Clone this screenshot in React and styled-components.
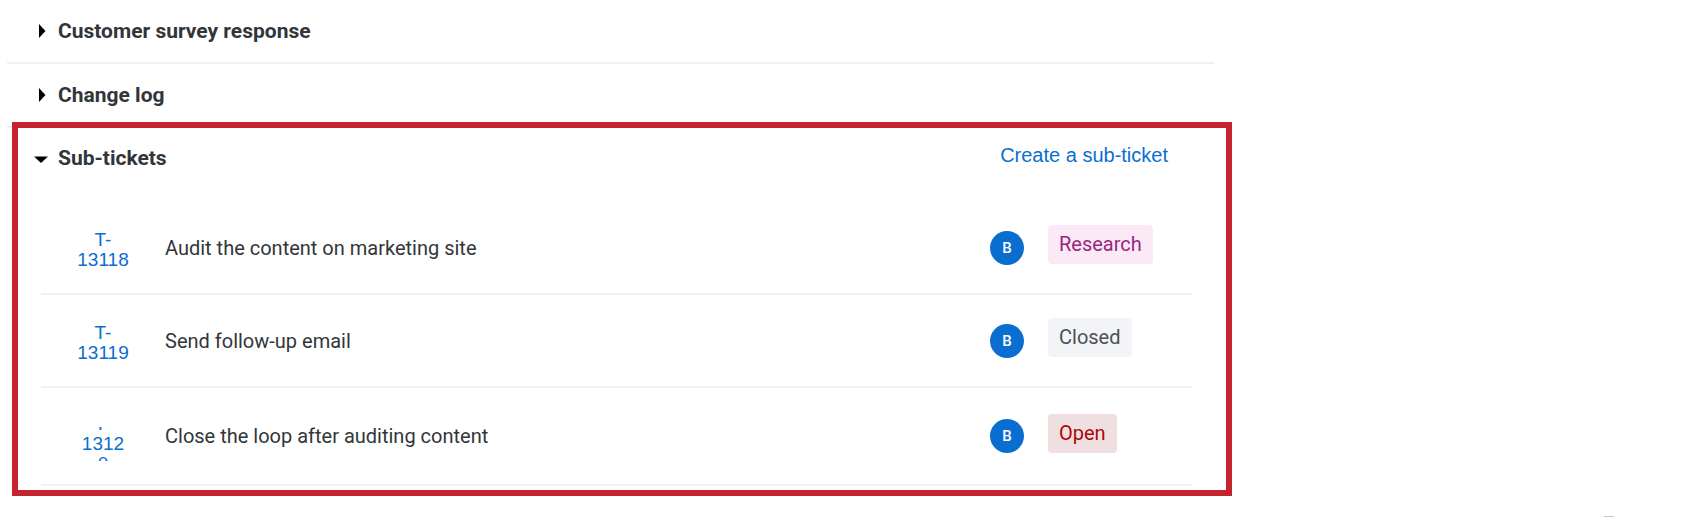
import React, { useState } from 'react';
import styled, { createGlobalStyle } from 'styled-components'


const tickets = [
  { id: 'T-13118', title: 'Audit the content on marketing site', owner: 'B', status: 'Research' },
  { id: 'T-13119', title: 'Send follow-up email', owner: 'B', status: 'Closed' },
  { id: 'T-13120', title: 'Close the loop after auditing content', owner: 'B', status: 'Open', narrow: true },
]

const statusColors = {
  Research: { text: '#99257f', background: '#fce9f6' },
  Closed: { text: '#4e5054', background: '#f3f4f7' },
  Open: { text: '#aa0808', background: '#f0dfe1' },
}

function Arrow({ open }){
  return(
    <svg width="14" height="14" viewBox="0 0 14 14" aria-hidden="true">
      {open ? <path d="M0 5.500h14L7 12z" /> : <path d="M5 0v14l6.500-7z" />}
    </svg>
  )
}

function SectionToggle({ title, open, onClick }){
  return(
    <Heading>
      <Toggle type="button" aria-expanded={open} onClick={onClick}>
        <Arrow open={open} />
        {title}
      </Toggle>
    </Heading>
  )
}

export default function App(){

  const [open, setOpen] = useState({ survey: false, log: false, tickets: true });
  const toggle = (key) => setOpen({ ...open, [key]: !open[key] });

  return(
    <Page>
      <GlobalStyle />
      <Main>
        <Section>
          <SectionToggle title="Customer survey response" open={open.survey} onClick={() => toggle('survey')} />
        </Section>
        <Section>
          <SectionToggle title="Change log" open={open.log} onClick={() => toggle('log')} />
        </Section>

        <Frame>
          <FrameHeader>
            <SectionToggle title="Sub-tickets" open={open.tickets} onClick={() => toggle('tickets')} />
            <CreateLink href="#create">Create a sub-ticket</CreateLink>
          </FrameHeader>
          {open.tickets &&
            <TicketList>
              {tickets.map((ticket) => (
                <TicketRow key={ticket.id} $tall={ticket.narrow}>
                  <IdCell $tall={ticket.narrow}>
                    <IdLink href={'#' + ticket.id} $narrow={ticket.narrow}>{ticket.id}</IdLink>
                  </IdCell>
                  <Title>{ticket.title}</Title>
                  <Avatar>{ticket.owner}</Avatar>
                  <StatusCell>
                    <Status $colors={statusColors[ticket.status]}>{ticket.status}</Status>
                  </StatusCell>
                </TicketRow>
              ))}
            </TicketList>
          }
        </Frame>
      </Main>
      <Footer>
        <Handle />
      </Footer>
    </Page>
  )
}

const GlobalStyle = createGlobalStyle`
  *{
    box-sizing:border-box;
  }
  body{
    margin:0;
    background-color:#fff;
    color:#32363a;
    font-family:Roboto, "Liberation Sans", sans-serif;
    font-size:20px;
    line-height:24px;
  }
  a{
    color:#0a6ed1;
    text-decoration:none;
  }
`

const Page = styled.div`
  min-height:100vh;
  display:flex;
  flex-direction:column;
`

const Main = styled.main`
  width:100%;
  max-width:1232px;
`

const Section = styled.section`
  display:flex;
  align-items:center;
  min-height:64px;
  margin:0 18px 0 7px;
  padding-left:27px;
  border-bottom:2px solid #f1f1f2;
`

const Heading = styled.h2`
  margin:0;
  font-size:21px;
`

const Toggle = styled.button`
  display:flex;
  align-items:center;
  gap:10px;
  padding:0;
  border:0;
  background:none;
  color:inherit;
  font:inherit;
  cursor:pointer;
  svg{
    fill:#000;
  }
`

/* the frame sits on top of the last section border */
const Frame = styled.section`
  position:relative;
  margin:-6px 0 0 12px;
  padding-bottom:4px;
  border:6px solid #c32430;
  background-color:#fff;
`

const FrameHeader = styled.div`
  display:flex;
  align-items:flex-start;
  justify-content:space-between;
  min-height:74px;
  padding:18px 58px 0 16px;
`

const CreateLink = styled.a`
  font-family:"Liberation Sans", Arial, sans-serif;
  line-height:18px;
`

const TicketList = styled.ul`
  list-style:none;
  margin:0 34px 0 23px;
  padding:0;
`

const TicketRow = styled.li`
  display:flex;
  align-items:center;
  min-height:${props => props.$tall ? `98px` : `93px`};
  border-bottom:2px solid #f1f1f2;
`

const IdCell = styled.div`
  flex:none;
  align-self:flex-end;
  display:flex;
  align-items:center;
  justify-content:center;
  width:124px;
  height:34px;
  margin-bottom:${props => props.$tall ? `23px` : `26px`};
  overflow:hidden;
`

const IdLink = styled.a`
  width:${props => props.$narrow ? `48px` : `56px`};
  font-family:"Liberation Sans", Arial, sans-serif;
  font-size:19px;
  line-height:20px;
  text-align:center;
  overflow-wrap:anywhere;
`

const Title = styled.span`
  flex:1;
`

const Avatar = styled.span`
  display:flex;
  align-items:center;
  justify-content:center;
  width:34px;
  height:34px;
  border-radius:50%;
  background-color:#0a6ed1;
  color:#fff;
  font-size:15px;
  font-weight:500;
`

const StatusCell = styled.span`
  width:168px;
  padding:0 0 6px 24px;
`

const Status = styled.span`
  display:inline-block;
  padding:7px 11px 8px;
  border-radius:4px;
  background-color:${props => props.$colors.background};
  color:${props => props.$colors.text};
`

const Footer = styled.footer`
  display:flex;
  justify-content:flex-end;
  margin-top:auto;
  padding:0 86px 1px 0;
`

const Handle = styled.div`
  width:10px;
  height:1px;
  background-color:#c4c4c4;
`
